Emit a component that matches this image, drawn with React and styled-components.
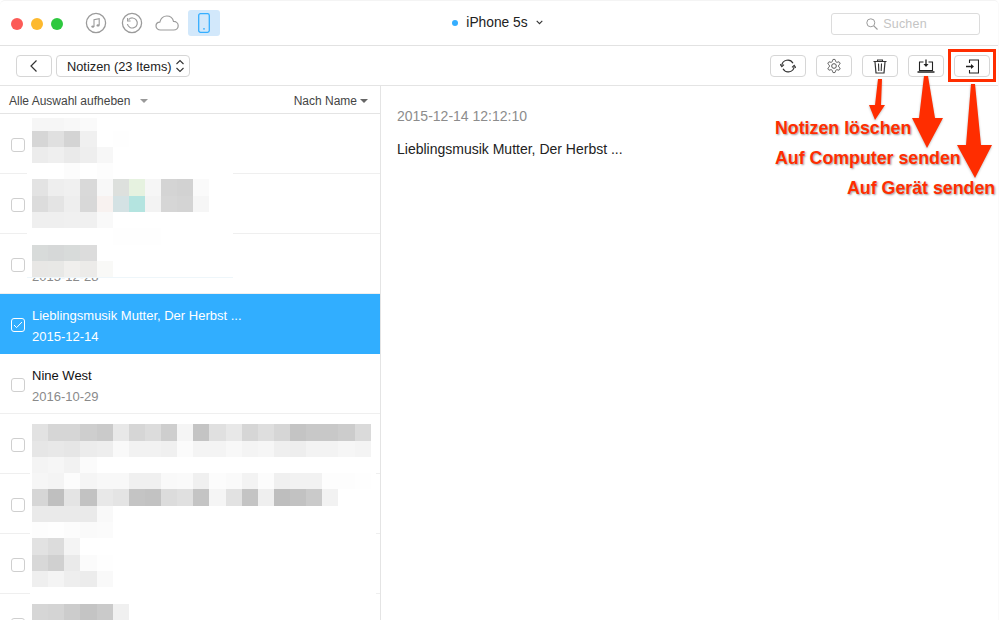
import React from "react";
import styled, { createGlobalStyle } from "styled-components";

const Global = createGlobalStyle`
  html, body { margin: 0; padding: 0; background: #fff; overflow: hidden; }
  body { font-family: "Liberation Sans", Arial, sans-serif; }
  * { box-sizing: border-box; }
`;

const Stage = styled.div`
  position: relative;
  width: 1004px;
  height: 620px;
  overflow: hidden;
  background: #fff;
`;

const Win = styled.div`
  width: 999px;
  height: 620px;
  display: flex;
  flex-direction: column;
  border-top: 1px solid #f4f4f4;
  border-right: 1px solid #fafafa;
  border-top-left-radius: 5px;
  border-top-right-radius: 5px;
  overflow: hidden;
`;

const TitleBar = styled.header`
  flex: 0 0 45px;
  display: grid;
  grid-template-columns: 1fr auto 1fr;
  align-items: center;
  border-bottom: 1px solid #e2e2e2;
  padding: 1px 18px 0 11px;
`;

const LeftGroup = styled.div`
  display: flex;
  align-items: center;
`;

const Lights = styled.div`
  display: flex;
  gap: 8px;
  margin-right: 16px;
`;

const Light = styled.span`
  width: 12px;
  height: 12px;
  border-radius: 50%;
  background: ${(p) => p.$c};
`;

const Modes = styled.div`
  display: flex;
  align-items: center;
  margin-bottom: 2px;
`;

const Mode = styled.div`
  width: ${(p) => p.$w}px;
  height: 26px;
  margin-right: ${(p) => p.$mr || 0}px;
  display: flex;
  align-items: center;
  justify-content: center;
  border-radius: 3px;
  background: ${(p) => (p.$on ? "#d2e8fb" : "transparent")};
`;

const Device = styled.div`
  display: flex;
  align-items: center;
  font-size: 13.8px;
  color: #222;
  padding: 0 0 2px 4px;
`;

const Dot = styled.span`
  width: 6px;
  height: 6px;
  border-radius: 50%;
  background: #35aeff;
  margin-right: 8px;
`;

const Search = styled.div`
  justify-self: end;
  width: 149px;
  height: 22px;
  border: 1px solid #dcdcdc;
  border-radius: 3px;
  display: flex;
  align-items: center;
  justify-content: center;
  gap: 5px;
  padding-right: 18px;
  font-size: 12.5px;
  color: #c4c4c4;
  letter-spacing: 0.2px;
`;

const ToolBar = styled.div`
  flex: 0 0 40px;
  display: flex;
  align-items: center;
  padding: 1px 8px 0 16px;
  border-bottom: 1px solid #e4e4e4;
`;

const ToolBtn = styled.button`
  width: 36px;
  height: 22px;
  padding: 0;
  background: #fff;
  border: 1px solid #d6d6d6;
  border-radius: 4px;
  display: flex;
  align-items: center;
  justify-content: center;
  margin-left: ${(p) => p.$ml || 0}px;
`;

const Select = styled.div`
  width: 134px;
  height: 22px;
  margin-left: 4px;
  border: 1px solid #d6d6d6;
  border-radius: 4px;
  display: flex;
  align-items: center;
  justify-content: space-between;
  padding: 0 4px 0 10px;
  font-size: 12.8px;
  color: #222;
  white-space: nowrap;
`;

const Spacer = styled.div`
  flex: 1;
`;

const Body = styled.div`
  flex: 1;
  display: flex;
  min-height: 0;
`;

const ListPane = styled.div`
  width: 381px;
  flex: 0 0 381px;
  border-right: 1px solid #e4e4e4;
  display: flex;
  flex-direction: column;
  min-height: 0;
`;

const ListHead = styled.div`
  flex: 0 0 28px;
  display: flex;
  align-items: center;
  justify-content: space-between;
  padding: 3px 12px 0 9px;
  border-bottom: 1px solid #e4e4e4;
  font-size: 12px;
  color: #444;
`;

const SortLabel = styled.span`
  display: flex;
  align-items: center;
  gap: ${(p) => p.$gap}px;
`;

const Tri = styled.span`
  width: 0;
  height: 0;
  border-left: 4px solid transparent;
  border-right: 4px solid transparent;
  border-top: 4px solid ${(p) => p.$c};
`;

const List = styled.div`
  position: relative;
  flex: 1;
  overflow: hidden;
`;

const Row = styled.div`
  height: 60px;
  display: flex;
  align-items: center;
  padding: 3px 0 0 11px;
  background: ${(p) => (p.$sel ? "#31aeff" : "#fff")};
  border-bottom: 1px solid ${(p) => (p.$sel ? "#31aeff" : "#efefef")};
`;

const Check = styled.span`
  width: 14px;
  height: 14px;
  flex: 0 0 14px;
  border: 1px solid ${(p) => (p.$sel ? "#fff" : "#cfcfcf")};
  border-radius: 3px;
  margin-right: 7px;
  display: flex;
  align-items: center;
  justify-content: center;
`;

const RowText = styled.div`
  display: flex;
  flex-direction: column;
  gap: 7px;
  padding-top: 2px;
`;

const RowTitle = styled.div`
  font-size: 13px;
  line-height: 14px;
  color: ${(p) => (p.$sel ? "#fff" : "#111")};
  white-space: nowrap;
`;

const RowDate = styled.div`
  font-size: 13px;
  line-height: 14px;
  color: ${(p) => (p.$sel ? "#fff" : "#8a8a8a")};
`;

const Mosaic = styled.div`
  position: absolute;
  left: ${(p) => p.$x}px;
  top: ${(p) => p.$y}px;
  width: ${(p) => p.$w}px;
  padding-left: ${(p) => p.$pad}px;
  height: ${(p) => p.$h}px;
  background: #fff;
  border-bottom: ${(p) => (p.$edge ? "1px solid #eef6fa" : "none")};
`;

const Band = styled.div`
  display: flex;
  height: ${(p) => p.$h}px;
`;

const Cell = styled.span`
  flex: 0 0 16.13px;
  height: 100%;
  background: ${(p) => p.$c};
`;

const Detail = styled.main`
  flex: 1;
  padding: 22px 16px;
`;

const DetailDate = styled.div`
  font-size: 14px;
  line-height: 16px;
  color: #8c8c8c;
`;

const DetailText = styled.div`
  margin-top: 17px;
  font-size: 14px;
  line-height: 16px;
  color: #222;
`;

const Overlay = styled.svg`
  position: absolute;
  inset: 0;
  pointer-events: none;
  filter: drop-shadow(0.5px 1px 1px rgba(0, 0, 0, 0.25));
`;

const Callout = styled.div`
  position: absolute;
  left: ${(p) => p.$x}px;
  top: ${(p) => p.$y}px;
  font-size: 17.8px;
  line-height: 20px;
  font-weight: 700;
  color: #ff2d00;
  white-space: nowrap;
  text-shadow: 1px 1px 2px rgba(0, 0, 0, 0.4);
`;

const FocusBox = styled.div`
  position: absolute;
  left: 948px;
  top: 49px;
  width: 48px;
  height: 33px;
  border: 3px solid #ff2d00;
`;

const g = "#9b9b9b";
const MusicIcon = () => (
  <svg width="22" height="22" viewBox="0 0 22 22" fill="none">
    <circle cx="11" cy="11" r="9.6" stroke={g} strokeWidth="1.3" />
    <path d="M9 14.5V7.6l5.2-1v6.6" stroke={g} strokeWidth="1.1" />
    <ellipse cx="7.8" cy="14.6" rx="1.5" ry="1.2" fill={g} />
    <ellipse cx="13" cy="13.4" rx="1.5" ry="1.2" fill={g} />
  </svg>
);
const HistoryIcon = () => (
  <svg width="22" height="22" viewBox="0 0 22 22" fill="none">
    <circle cx="11" cy="11" r="9.6" stroke={g} strokeWidth="1.3" />
    <path d="M7.6 7.6a5 5 0 1 1-1.2 4.4" stroke={g} strokeWidth="1.2" />
    <path d="M6.6 6v3h3" stroke={g} strokeWidth="1.1" />
  </svg>
);
const CloudIcon = () => (
  <svg width="24" height="16" viewBox="0 0 24 16" fill="none">
    <path
      d="M5.5 15C3 15 1 13.3 1 11c0-2.1 1.7-3.8 3.8-3.9C5.7 3.6 8.5 1 11.8 1c3.3 0 6 2.3 6.7 5.4 2.6 0 4.7 1.9 4.7 4.3 0 2.4-2 4.3-4.5 4.3z"
      stroke={g}
      strokeWidth="1.2"
    />
  </svg>
);
const PhoneIcon = () => (
  <svg width="12" height="20" viewBox="0 0 12 20" fill="none">
    <rect x="0.7" y="0.7" width="10.6" height="18.6" rx="1.8" stroke="#35aeff" strokeWidth="1.3" />
    <circle cx="6" cy="15.8" r="0.9" fill="#35aeff" />
  </svg>
);
const BackIcon = () => (
  <svg width="10" height="14" viewBox="0 0 10 14" fill="none">
    <path d="M7.5 1.5L2 7l5.5 5.5" stroke="#333" strokeWidth="1.2" />
  </svg>
);
const UpDown = () => (
  <svg width="10" height="14" viewBox="0 0 10 14" fill="none">
    <path d="M1.5 5L5 1.5 8.5 5M1.5 9L5 12.5 8.5 9" stroke="#333" strokeWidth="1.1" />
  </svg>
);
const SyncIcon = () => (
  <svg width="16" height="14" viewBox="0 0 16 14" fill="none">
    <path d="M1.8 6.5A6 6 0 0 1 13 4.2" stroke="#333" strokeWidth="1.2" />
    <path d="M14.2 7.5A6 6 0 0 1 3 9.8" stroke="#333" strokeWidth="1.2" />
    <path d="M0 5.2L1.8 7.6 4 5.6M16 8.8L14.2 6.4 12 8.4" stroke="#333" strokeWidth="1.1" />
  </svg>
);
const GearIcon = () => (
  <svg width="16" height="16" viewBox="0 0 24 24" fill="none" stroke="#555" strokeWidth="1.5">
    <path d="M12.22 2h-.44a2 2 0 0 0-2 2v.18a2 2 0 0 1-1 1.73l-.43.25a2 2 0 0 1-2 0l-.15-.08a2 2 0 0 0-2.73.73l-.22.38a2 2 0 0 0 .73 2.73l.15.1a2 2 0 0 1 1 1.72v.51a2 2 0 0 1-1 1.74l-.15.09a2 2 0 0 0-.73 2.73l.22.38a2 2 0 0 0 2.73.73l.15-.08a2 2 0 0 1 2 0l.43.25a2 2 0 0 1 1 1.73V20a2 2 0 0 0 2 2h.44a2 2 0 0 0 2-2v-.18a2 2 0 0 1 1-1.73l.43-.25a2 2 0 0 1 2 0l.15.08a2 2 0 0 0 2.73-.73l.22-.39a2 2 0 0 0-.73-2.73l-.15-.08a2 2 0 0 1-1-1.74v-.5a2 2 0 0 1 1-1.74l.15-.09a2 2 0 0 0 .73-2.73l-.22-.38a2 2 0 0 0-2.73-.73l-.15.08a2 2 0 0 1-2 0l-.43-.25a2 2 0 0 1-1-1.73V4a2 2 0 0 0-2-2z" />
    <circle cx="12" cy="12" r="3.5" />
  </svg>
);
const TrashIcon = () => (
  <svg width="14" height="15" viewBox="0 0 14 15" fill="none">
    <path d="M0.5 2.5h13M4.5 2.5V1h5v1.5" stroke="#333" strokeWidth="1.1" />
    <path d="M2 3l1 11h8l1-11" stroke="#333" strokeWidth="1.2" />
    <path d="M5.5 4.5l.3 7.5M8.5 4.5l-.3 7.5" stroke="#333" strokeWidth="1.1" />
  </svg>
);
const SendPcIcon = () => (
  <svg width="18" height="14" viewBox="0 0 18 14" fill="none">
    <path d="M6.5 3H2.500v8.500h13V3h-4" stroke="#222" strokeWidth="1.1" />
    <path d="M0.5 13h17" stroke="#222" strokeWidth="1.3" />
    <path d="M9 0.5v6.5" stroke="#222" strokeWidth="1.3" />
    <path d="M6.5 5L9 8l2.5-3z" fill="#222" />
  </svg>
);
const SendDevIcon = () => (
  <svg width="13" height="15" viewBox="0 0 13 15" fill="none">
    <path d="M3.5 4V1h9v13h-9v-3" stroke="#222" strokeWidth="1.1" />
    <path d="M0 7.5h6.5" stroke="#222" strokeWidth="1.3" />
    <path d="M5 5l3 2.5L5 10z" fill="#222" />
  </svg>
);
const MagIcon = () => (
  <svg width="12" height="12" viewBox="0 0 12 12" fill="none">
    <circle cx="4.8" cy="4.8" r="4" stroke="#9a9a9a" strokeWidth="1" />
    <path d="M7.8 7.8L11.5 11.5" stroke="#9a9a9a" strokeWidth="1.1" />
  </svg>
);
const TickIcon = () => (
  <svg width="10" height="8" viewBox="0 0 10 8" fill="none">
    <path d="M1 4l2.6 2.6L9 1" stroke="#fff" strokeWidth="1" />
  </svg>
);
const DeviceChevron = styled.svg`
  margin-left: 8px;
`;
const Chevron = () => (
  <DeviceChevron width="7" height="5" viewBox="0 0 7 5" fill="none">
    <path d="M0.7 0.8L3.5 3.6 6.3 0.8" stroke="#333" strokeWidth="1.1" />
  </DeviceChevron>
);

const h = (v) => "#" + v + v + v;
const band = (height, ...cells) => ({ height, cells: cells.map((c) => (c.length === 2 ? h(c) : "#" + c)) });

const mosaicTop = [
  band(4),
  band(13, "f6", "f6", "f8", "fa"),
  band(16, "d6", "e0", "d4", "f0", "ff", "fe"),
  band(16, "ec", "ef", "ea", "ee", "f7"),
  band(16, "ff", "ff", "fc", "ff", "fd"),
  band(17, "e3", "ee", "f0", "d9", "f8", "dde0dd", "e6f2e0", "f6", "d4", "d2", "fa"),
  band(16, "dc", "e4", "ee", "d8", "f8f2f0", "d4e2e4", "b4e4e0", "f3", "d6", "d4", "f6"),
  band(16, "ef", "ef", "f0", "f0", "f9"),
  band(17, "ff", "ff", "ff", "ff", "ff", "fe", "fe", "fe", "ff", "ff", "ff"),
  band(16, "d8dbda", "d6d8d8", "d8dbda", "dcdcdc"),
  band(16, "e8e7e5", "e8e8e6", "f0efed", "ecebe9", "f9f9f7"),
];

const mosaicBottom = [
  band(10),
  band(17, "e2", "d6", "d6", "ce", "ca", "e8", "d6", "dc", "ce", "f5", "c4", "e0", "e8", "d6", "de", "d6", "c4", "c8", "c8", "cc", "da"),
  band(16, "e6", "e8", "e6", "ec", "ee", "f9", "f2", "f2", "f0", "fb", "f4", "f4", "f8", "f4", "f6", "ef", "ee", "f3", "f3", "f6", "f4"),
  band(16, "f4", "f6", "f2", "fb"),
  band(16, "f6", "f4", "fc", "f5", "f8", "f8", "f0", "f0", "f9", "fa", "f0", "fc", "fa", "f3", "fc", "f0", "f2", "f2", "fd", "fd", "fe"),
  band(17, "d6", "bf", "e4", "c2", "e8", "e4", "c4", "c2", "dc", "e0", "c4", "f5", "e2", "c4", "ef", "be", "c2", "ca", "f2"),
  band(16, "ea", "ea", "ea", "ea", "f9"),
  band(16, "fd", "fe", "fc", "fa", "fb"),
  band(17, "e2", "dc", "f4"),
  band(16, "d8", "d0", "ea", "fb", "fe"),
  band(16, "ef", "f4", "ee", "ec", "f9"),
  band(17),
  band(16, "d6", "d4", "cc", "c4", "ca", "f0"),
];

const rows = [
  {},
  {},
  { date: "2015-12-28" },
  { sel: true, title: "Lieblingsmusik Mutter, Der Herbst ...", date: "2015-12-14" },
  { title: "Nine West", date: "2016-10-29" },
  {},
  {},
  {},
  {},
];

const renderBands = (bands) =>
  bands.map((b, i) => (
    <Band key={i} $h={b.height}>
      {b.cells.map((c, j) => (
        <Cell key={j} $c={c} />
      ))}
    </Band>
  ));

export default function App() {
  return (
    <Stage>
      <Global />
      <Win>
        <TitleBar>
          <LeftGroup>
            <Lights>
              <Light $c="#fc5b57" />
              <Light $c="#fdb92e" />
              <Light $c="#2ec83f" />
            </Lights>
            <Modes>
              <Mode $w={34} $mr={2}><MusicIcon /></Mode>
              <Mode $w={34} $mr={4}><HistoryIcon /></Mode>
              <Mode $w={28} $mr={7}><CloudIcon /></Mode>
              <Mode $w={32} $on><PhoneIcon /></Mode>
            </Modes>
          </LeftGroup>
          <Device>
            <Dot />
            iPhone 5s
            <Chevron />
          </Device>
          <Search>
            <MagIcon />
            Suchen
          </Search>
        </TitleBar>
        <ToolBar>
          <ToolBtn><BackIcon /></ToolBtn>
          <Select>
            Notizen (23 Items)
            <UpDown />
          </Select>
          <Spacer />
          <ToolBtn><SyncIcon /></ToolBtn>
          <ToolBtn $ml={10}><GearIcon /></ToolBtn>
          <ToolBtn $ml={10}><TrashIcon /></ToolBtn>
          <ToolBtn $ml={10}><SendPcIcon /></ToolBtn>
          <ToolBtn $ml={10}><SendDevIcon /></ToolBtn>
        </ToolBar>
        <Body>
          <ListPane>
            <ListHead>
              <SortLabel $gap={10}>
                Alle Auswahl aufheben
                <Tri $c="#999" />
              </SortLabel>
              <SortLabel $gap={3}>
                Nach Name
                <Tri $c="#666" />
              </SortLabel>
            </ListHead>
            <List>
              {rows.map((r, i) => (
                <Row key={i} $sel={r.sel}>
                  <Check $sel={r.sel}>{r.sel && <TickIcon />}</Check>
                  <RowText>
                    <RowTitle $sel={r.sel}>{r.title || "\u00a0"}</RowTitle>
                    <RowDate $sel={r.sel}>{r.date || "\u00a0"}</RowDate>
                  </RowText>
                </Row>
              ))}
              <Mosaic $x={27} $y={0} $w={206} $h={164} $pad={5} $edge>
                {renderBands(mosaicTop)}
              </Mosaic>
              <Mosaic $x={30} $y={300} $w={346} $h={210} $pad={2}>
                {renderBands(mosaicBottom)}
              </Mosaic>
            </List>
          </ListPane>
          <Detail>
            <DetailDate>2015-12-14 12:12:10</DetailDate>
            <DetailText>Lieblingsmusik Mutter, Der Herbst ...</DetailText>
          </Detail>
        </Body>
      </Win>
      <FocusBox />
      <Overlay width="1004" height="620" viewBox="0 0 1004 620">
        <g fill="#ff2d00">
          <path d="M878 79L882 79L881 105L885 105L875 120L869 105L875 105Z" />
          <path d="M924 76L928 76L935 118L943 118L927 148L912 118L919 118Z" />
          <path d="M971 84L975 84L981 145L992 145L975 178L957 145L966 145Z" />
        </g>
      </Overlay>
      <Callout $x={775} $y={118}>Notizen löschen</Callout>
      <Callout $x={775} $y={148}>Auf Computer senden</Callout>
      <Callout $x={847} $y={178}>Auf Gerät senden</Callout>
    </Stage>
  );
}
